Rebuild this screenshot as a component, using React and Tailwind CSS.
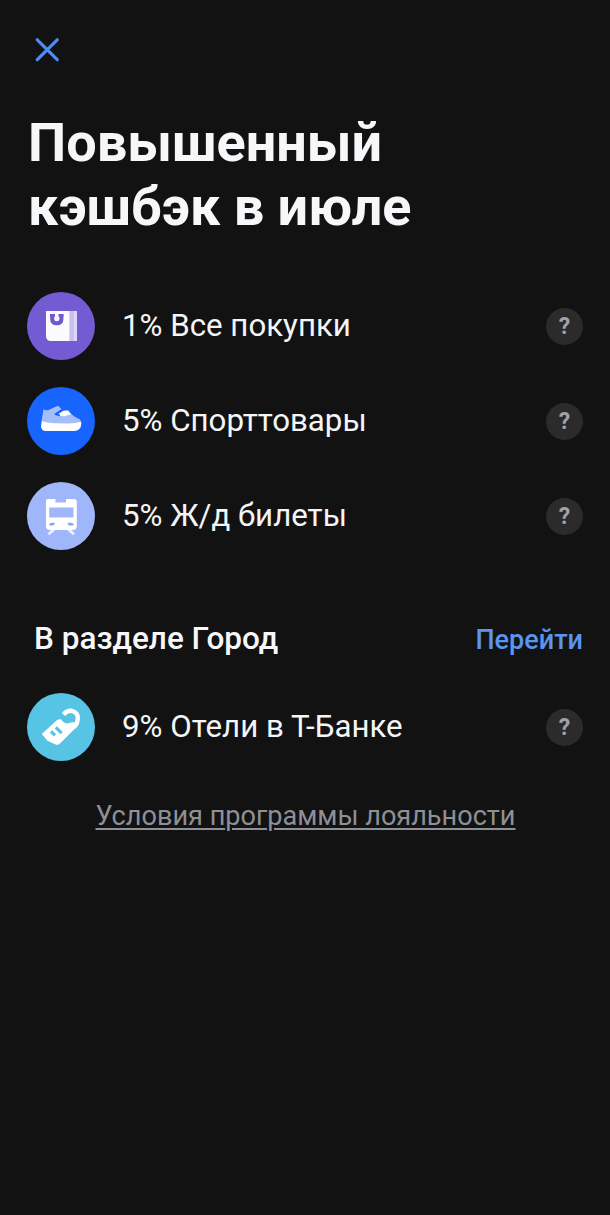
import React from 'react';

const BagIcon = () => (
  <svg viewBox="0 0 68 68" className="w-full h-full">
    <path d="M19 19H43V49H24Q19 49 19 44Z" fill="#fbfaff" />
    <path d="M42.3 19H46.5V49H42.3Z" fill="#c9c0f0" />
    <path d="M46.3 19H50V49H46.3Z" fill="#ded8f8" />
    <path d="M23 23.4H28M31.5 23.4H36.5" stroke="#7059cf" strokeWidth="2.8" />
    <path d="M25.2 22.5V27.2Q25.2 31.2 29.8 31.2Q34.4 31.2 34.4 27.2V22.5" fill="none" stroke="#7059cf" strokeWidth="4" />
  </svg>
);

const ShoeIcon = () => (
  <svg viewBox="0 0 68 68" className="w-full h-full">
    <path d="M16.5 22.3Q18.5 23.7 21 23.2L29 19.4Q31 18.4 32.5 20L35 22.6L28 26.8L29 28.8L41 23Q44.5 27.5 47 29.3L53 32.5Q54.3 34 54.2 37L17 37L14.5 34.5Z" fill="#a5bdf9" />
    <path d="M29.3 28L36.5 23.8Q39.5 22.8 41.5 24.4L44 27.3L37.5 29.2L32.5 29Z" fill="#fff" />
    <path d="M35.5 22.4L29 26.8L32.8 28.6" stroke="#1764ff" strokeWidth="1.8" fill="none" />
    <path d="M14.7 34Q20 36 29 36.2L41 36.5Q49 36.3 54.2 34.8Q54.7 40.5 51.5 42.7Q49.7 44 46 44H19Q14 44 14 39Z" fill="#fff" />
  </svg>
);

const TrainIcon = () => (
  <svg viewBox="0 0 68 68" className="w-full h-full">
    <path d="M27 47.5L21.5 52.3M41.5 47.5L47 52.3" stroke="#eef2ff" strokeWidth="2.8" />
    <path
      fillRule="evenodd"
      d="M21 17H28.5V20.5H39V17H47Q49.8 17 49.8 20V44Q49.8 48 46 48H23Q19 48 19 44V19Q19 17 21 17ZM22.2 25.5V35.6H46.5V25.5Z"
      fill="#fff"
    />
    <path d="M21.8 42.2Q24 40.2 28 41L26.5 43.6H23ZM47 42.2Q44.5 40.2 40.3 41L41.8 43.6H45.5Z" fill="#8ba2ec" />
  </svg>
);

const HotelIcon = () => (
  <svg viewBox="0 0 68 68" className="w-full h-full">
    <path d="M14.8 41L29.5 27.5Q31.5 26 34 26.3Q36 29.8 40 30.5L46 29L51 31L49 34.5L33 50.5Q30.8 52.8 28 51.2L20.5 47.7Z" fill="#fff" />
    <path d="M36.5 21.5Q40 17.3 44.5 17.8Q50.8 19.2 50.8 25Q50.8 30.5 47 34.2" fill="none" stroke="#fff" strokeWidth="4.4" />
    <path d="M38.8 23Q41.8 20 45 20.8Q48 22.3 47.2 25.7Q45 29.8 40.5 29.3Q36.6 28.8 35.5 25.8Z" fill="#57c3e5" />
    <path d="M24 38.3L28 42.3M28.8 34.3L34.6 40.1" stroke="#57c3e5" strokeWidth="3.2" />
  </svg>
);

const cashback = [
  { text: '1% Все покупки', bg: 'bg-[#735bd3]', Icon: BagIcon },
  { text: '5% Спорттовары', bg: 'bg-[#1764ff]', Icon: ShoeIcon },
  { text: '5% Ж/д билеты', bg: 'bg-[#a0b6fb]', Icon: TrainIcon },
];

function Row({ text, bg, Icon }) {
  return (
    <div className="flex items-center h-[68px]">
      <div className={`w-[68px] h-[68px] rounded-full shrink-0 ${bg}`}>
        <Icon />
      </div>
      <span className="ml-[27px] flex-1 text-[31.25px] leading-9 text-[#f4f5f7] whitespace-nowrap">{text}</span>
      <button className="w-[37px] h-[37px] rounded-full bg-[#2b2b2c] text-[#a0a1ab] text-[23px] leading-none font-bold flex items-center justify-center">
        ?
      </button>
    </div>
  );
}

export default function App() {
  return (
    <div className="w-full h-[1215px] bg-[#121212] font-['Roboto',sans-serif] px-[27px] pt-[38px] overflow-hidden">
      <button className="block ml-2 w-6 h-6">
        <svg viewBox="0 0 24 24" className="w-6 h-6">
          <path d="M2.3 1.8L22.2 21.7M22.2 1.8L2.3 21.7" stroke="#4c8df0" strokeWidth="3.2" strokeLinecap="round" />
        </svg>
      </button>

      <h1 className="mt-[49px] pl-px text-[54px] leading-[63.5px] font-bold text-[#f6f7f9] whitespace-nowrap">
        Повышенный
        <br />
        кэшбэк в июле
      </h1>

      <div className="mt-[54px] flex flex-col gap-[27px]">
        {cashback.map((item) => (
          <Row key={item.text} {...item} />
        ))}
      </div>

      <div className="mt-[69px] pl-[7px] h-10 flex items-center justify-between">
        <h2 className="text-[31.5px] font-medium text-[#f6f7f9] whitespace-nowrap">В разделе Город</h2>
        <a className="pt-0.5 text-[27px] font-medium text-[#5a95f0]">Перейти</a>
      </div>

      <div className="mt-[34px]">
        <Row text="9% Отели в Т-Банке" bg="bg-[#57c3e5]" Icon={HotelIcon} />
      </div>

      <div className="mt-[39px] pl-px text-center">
        <a className="text-[27.1px] leading-8 text-[#8e9097] underline decoration-2 underline-offset-3 whitespace-nowrap">
          Условия программы лояльности
        </a>
      </div>
    </div>
  );
}
